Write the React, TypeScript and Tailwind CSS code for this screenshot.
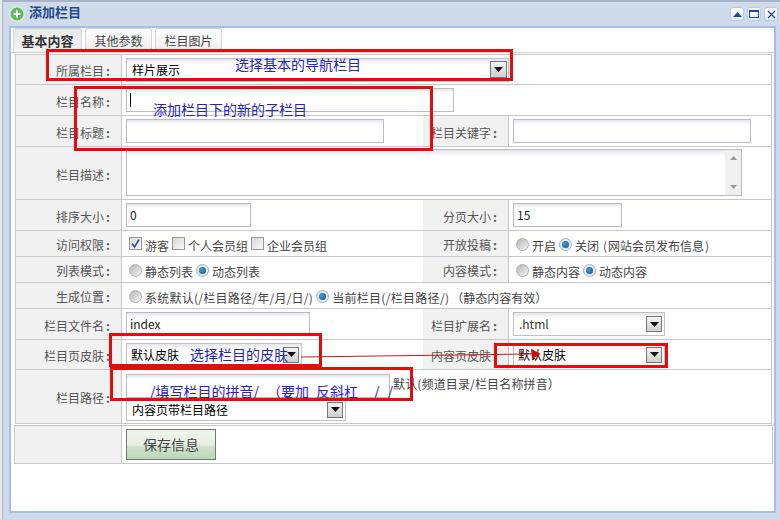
import React from "react";

const font = { fontFamily: '"Noto Sans CJK SC", "Liberation Sans", sans-serif' };

function Label({ text, w = "w-[106px]" }: { text?: string; w?: string }) {
  return (
    <div className={`${w} shrink-0 h-full bg-[#f1f1f1] border-r border-[#c8c8c8] flex items-center justify-end pr-[11px] pt-[3px] text-[12px] text-[#555]`}>
      {text}
      {text && <span className="ml-[2px] font-bold">:</span>}
    </div>
  );
}

function Row({ h, children, last }: { h: string; children: React.ReactNode; last?: boolean }) {
  return <div className={`${h} flex ${last ? "" : "border-b border-[#c8c8c8]"}`}>{children}</div>;
}

function Input({ w, h = "h-[24px]", value, caret }: { w: string; h?: string; value?: string; caret?: boolean }) {
  return (
    <div className={`${w} ${h} shrink-0 border border-[#b8bcc8] bg-gradient-to-b from-[#e6e6ea] via-white via-[20%] to-white flex items-center pl-[3px] text-[12px] text-[#222]`}>
      {caret && <span className="w-px h-[14px] bg-black" />}
      {value}
    </div>
  );
}

function Arrow({ big }: { big?: boolean }) {
  return (
    <div className={`${big ? "w-[17px] h-[17px]" : "w-[16px] h-[16px]"} border border-[#777] bg-gradient-to-b from-[#f4f4f4] to-[#cfcfcf] flex items-center justify-center`}>
      <svg width="9" height="5" viewBox="0 0 9 5"><path d="M0 0h9L4.5 5z" fill="#111" /></svg>
    </div>
  );
}

function Select({ w, value, h = "h-[24px]", big, pl = "pl-[5px]", color = "text-black" }: { w: string; value: string; h?: string; big?: boolean; pl?: string; color?: string }) {
  return (
    <div className={`${w} ${h} shrink-0 border border-[#c0c0c8] bg-gradient-to-b from-[#e6e6ea] via-white via-[25%] to-white flex items-center justify-between ${pl} ${big ? "pr-[1px]" : "pr-[2px]"} text-[12px] ${color}`}>
      <span>{value}</span>
      <Arrow big={big} />
    </div>
  );
}

function Radio({ on, first }: { on?: boolean; first?: boolean }) {
  const m = first ? "" : "ml-[3px]";
  return on ? (
    <span className={`inline-flex w-[13px] h-[13px] rounded-full bg-[#e4eaf2] border border-[#a8b0b8] items-center justify-center mr-[3px] relative top-[-1px] ${m}`}>
      <span className="w-[7px] h-[7px] rounded-full bg-[radial-gradient(circle_at_40%_40%,#3fa0e0,#0a4a80)]" />
    </span>
  ) : (
    <span className={`inline-block w-[13px] h-[13px] rounded-full bg-gradient-to-br from-[#b4b4b4] to-[#f6f6f6] border border-[#b0b0b0] mr-[3px] relative top-[-1px] ${m}`} />
  );
}

function Check({ on, first }: { on?: boolean; first?: boolean }) {
  return (
    <span className={`inline-flex w-[13px] h-[13px] border border-[#999] bg-gradient-to-br from-[#d8d8d8] to-[#f8f8f8] items-center justify-center mr-[3px] relative top-[-2px] ${first ? "" : "ml-[3px]"}`}>
      {on && (
        <svg width="11" height="11" viewBox="0 0 11 11">
          <path d="M2 5.5 4.5 9 9 1.5" fill="none" stroke="#33509a" strokeWidth="1.6" />
        </svg>
      )}
    </span>
  );
}

function Options({ children, w = "flex-1" }: { children: React.ReactNode; w?: string }) {
  return <div className={`${w} h-full flex items-center pl-[7px] pt-[4px] text-[12px] text-[#444] whitespace-pre`}>{children}</div>;
}

function Cell({ children, w }: { children: React.ReactNode; w?: string }) {
  return <div className={`${w ?? "flex-1"} h-full flex items-center pl-[4px] min-w-0`}>{children}</div>;
}

function Box({ x, y, w, h }: { x: number; y: number; w: number; h: number }) {
  return <div className="absolute border-[3px] border-[#e30d0d] pointer-events-none" style={{ left: x, top: y, width: w, height: h }} />;
}

function Note({ x, y, children }: { x: number; y: number; children: React.ReactNode }) {
  return (
    <div className="absolute text-[14px] leading-[18px] text-[#2323c4] whitespace-pre flex" style={{ left: x, top: y }}>
      {children}
    </div>
  );
}

function WinBtn({ children }: { children: React.ReactNode }) {
  return (
    <div className="w-[14px] h-[14px] rounded-[3px] bg-gradient-to-b from-white to-[#e3ebf6] border border-[#bccbe2] flex items-center justify-center">
      {children}
    </div>
  );
}

export default function App() {
  return (
    <div className="w-[780px] h-[519px] relative overflow-hidden bg-[#cfdbeb] flex" style={font}>
      <div className="w-[3px] h-full bg-[#e9eaec] border-r border-[#b0b8c4] shrink-0" />
      <div className="flex-1 flex flex-col min-w-0 border-t-2 border-t-[#a8b4c8]">
        <div className="h-[24px] shrink-0 flex items-center pl-[6px]">
          <svg width="16" height="16" viewBox="0 0 16 16" className="mr-[4px] mb-[1px]">
            <circle cx="8" cy="8" r="7.2" fill="#64b564" stroke="#d8ecd8" strokeWidth="1.4" />
            <path d="M8 4.5v7M4.5 8h7" stroke="#fff" strokeWidth="2" />
          </svg>
          <span className="text-[13px] font-bold text-[#1f4a86] mb-[4px]">添加栏目</span>
          <div className="ml-auto mr-[2px] flex gap-[3px]">
            <WinBtn><svg width="9" height="5" viewBox="0 0 9 5"><path d="M0 5h9L4.5 0z" fill="#27479a" /></svg></WinBtn>
            <WinBtn><div className="w-[10px] h-[8px] border border-[#27479a] border-t-2" /></WinBtn>
            <WinBtn><svg width="9" height="9" viewBox="0 0 9 9"><path d="M1 1l7 7M8 1 1 8" stroke="#27479a" strokeWidth="1.3" /></svg></WinBtn>
          </div>
        </div>
        <div className="ml-[6px] mr-[4px] h-[487px] shrink-0 border-2 border-[#a6bfe6] bg-white flex flex-col">
          <div className="h-[25px] shrink-0 flex items-end gap-[3px] pl-[2px] pt-[1px] border-b border-[#d0d0d0]">
            <div className="w-[69px] h-[24px] rounded-t-[3px] bg-gradient-to-b from-[#e8e8e8] to-[#f4f4f4] border border-b-0 border-[#d4d4d4] text-[13px] font-bold text-[#333] flex items-center justify-center">基本内容</div>
            <div className="w-[67px] h-[24px] rounded-t-[3px] bg-gradient-to-b from-white to-[#eeeeee] border border-b-0 border-[#d4d4d4] text-[12px] text-[#444] flex items-center justify-center">其他参数</div>
            <div className="w-[67px] h-[24px] rounded-t-[3px] bg-gradient-to-b from-white to-[#eeeeee] border border-b-0 border-[#d4d4d4] text-[12px] text-[#444] flex items-center justify-center">栏目图片</div>
          </div>
          <div className="ml-[4px] mt-[1px] w-[757px] border border-[#c8c8c8] flex flex-col">
            <Row h="h-[30px]">
              <Label text="所属栏目" />
              <Cell><Select w="w-[383px]" value="样片展示" big /></Cell>
            </Row>
            <Row h="h-[31px]">
              <Label text="栏目名称" />
              <Cell><Input w="w-[328px]" caret /></Cell>
            </Row>
            <Row h="h-[31px]">
              <Label text="栏目标题" />
              <Cell w="w-[301px]"><Input w="w-[258px]" /></Cell>
              <Label w="w-[86px]" text="栏目关键字" />
              <Cell><Input w="w-[238px]" /></Cell>
            </Row>
            <Row h="h-[53px]">
              <Label text="栏目描述" />
              <Cell>
                <div className="w-[616px] h-[47px] mb-[1px] border border-[#b8bcc8] bg-gradient-to-b from-[#e6e6ea] via-white via-[15%] to-white flex justify-end">
                  <div className="w-[16px] h-full bg-[#f0f0f0] flex flex-col items-center justify-between py-[6px]">
                    <svg width="7" height="4" viewBox="0 0 7 4"><path d="M0 4h7L3.5 0z" fill="#999" /></svg>
                    <svg width="7" height="4" viewBox="0 0 7 4"><path d="M0 0h7L3.5 4z" fill="#999" /></svg>
                  </div>
                </div>
              </Cell>
            </Row>
            <Row h="h-[31px]">
              <Label text="排序大小" />
              <Cell w="w-[301px]"><Input w="w-[125px]" value="0" /></Cell>
              <Label w="w-[86px]" text="分页大小" />
              <Cell><Input w="w-[109px]" value="15" /></Cell>
            </Row>
            <Row h="h-[26px]">
              <Label text="访问权限" />
              <Options w="w-[301px]">
                <Check on first />游客<Check />个人会员组<Check />企业会员组
              </Options>
              <Label w="w-[86px]" text="开放投稿" />
              <Options>
                <Radio first />开启<Radio on />关闭<span className="ml-[4px] mr-[1px]">(</span>网站会员发布信息<span className="ml-[1px]">)</span>
              </Options>
            </Row>
            <Row h="h-[26px]">
              <Label text="列表模式" />
              <Options w="w-[301px]">
                <Radio first />静态列表<Radio on />动态列表
              </Options>
              <Label w="w-[86px]" text="内容模式" />
              <Options>
                <Radio first />静态内容<Radio on />动态内容
              </Options>
            </Row>
            <Row h="h-[26px]">
              <Label text="生成位置" />
              <Options>
                <Radio first /><span className="tracking-[0.25px]">系统默认(/栏目路径/年/月/日/)</span>
                <Radio on /><span className="tracking-[0.3px]">当前栏目(/栏目路径/)</span><span className="ml-[2px]">（静态内容有效）</span>
              </Options>
            </Row>
            <Row h="h-[31px]">
              <Label text="栏目文件名" />
              <Cell w="w-[301px]"><Input w="w-[184px]" value="index" /></Cell>
              <Label w="w-[86px]" text="栏目扩展名" />
              <Cell><Select w="w-[152px]" value=".html" color="text-[#333]" /></Cell>
            </Row>
            <Row h="h-[30px]">
              <Label text="栏目页皮肤" />
              <Cell w="w-[301px]"><Select w="w-[176px]" value="默认皮肤" pl="pl-[4px]" /></Cell>
              <Label w="w-[86px]" text="内容页皮肤" />
              <Cell><Select w="w-[152px]" value="默认皮肤" pl="pl-[4px]" /></Cell>
            </Row>
            <Row h="h-[53px]" last>
              <Label text="栏目路径" />
              <div className="flex-1 flex flex-col pl-[4px] pt-[4px] text-[12px] text-[#444]">
                <div className="flex items-start">
                  <Input w="w-[264px]" />
                  <span className="ml-[3px] mt-[1px] tracking-[0.15px] whitespace-pre">默认(频道目录/栏目名称拼音）</span>
                </div>
                <Select w="w-[220px]" h="h-[23px]" value="内容页带栏目路径" />
              </div>
            </Row>
          </div>
          <div className="ml-[3px] mt-[1px] w-[759px] h-[39px] border border-[#c8c8c8] flex">
            <Label w="w-[107px]" />
            <div className="flex items-center pl-[4px]">
              <div className="w-[90px] h-[31px] border border-[#777] bg-[linear-gradient(to_bottom,#eff5ec_0%,#e6f0e2_50%,#cfe3cc_58%,#b8d8b8_100%)] flex items-center justify-center text-[14px] text-[#444]">保存信息</div>
            </div>
          </div>
        </div>
      </div>

      <Note x={235} y={55}>选择基本的导航栏目</Note>
      <Note x={153} y={100}>添加栏目下的新的子栏目</Note>
      <Note x={190} y={345}>选择栏目的皮肤</Note>
      <Note x={150} y={382}>
        <span>/填写栏目的拼音/</span>
        <span className="ml-[8px]">（要加</span>
        <span className="ml-[7px]">反斜杠</span>
        <span className="ml-[16px]">/</span>
        <span className="ml-[8px]">/</span>
      </Note>
      <Box x={46} y={49} w={467} h={32} />
      <Box x={74} y={86} w={359} h={65} />
      <Box x={109} y={333} w={213} h={34} />
      <Box x={110} y={367} w={303} h={34} />
      <Box x={494} y={343} w={174} h={25} />
      <svg className="absolute left-[300px] top-[345px]" width="245" height="18" viewBox="0 0 245 18">
        <path d="M1 12 L231 9" stroke="#c81818" strokeWidth="1" fill="none" />
        <path d="M231 4 L241 9 L232 14 z" fill="#d01010" />
      </svg>
    </div>
  );
}
